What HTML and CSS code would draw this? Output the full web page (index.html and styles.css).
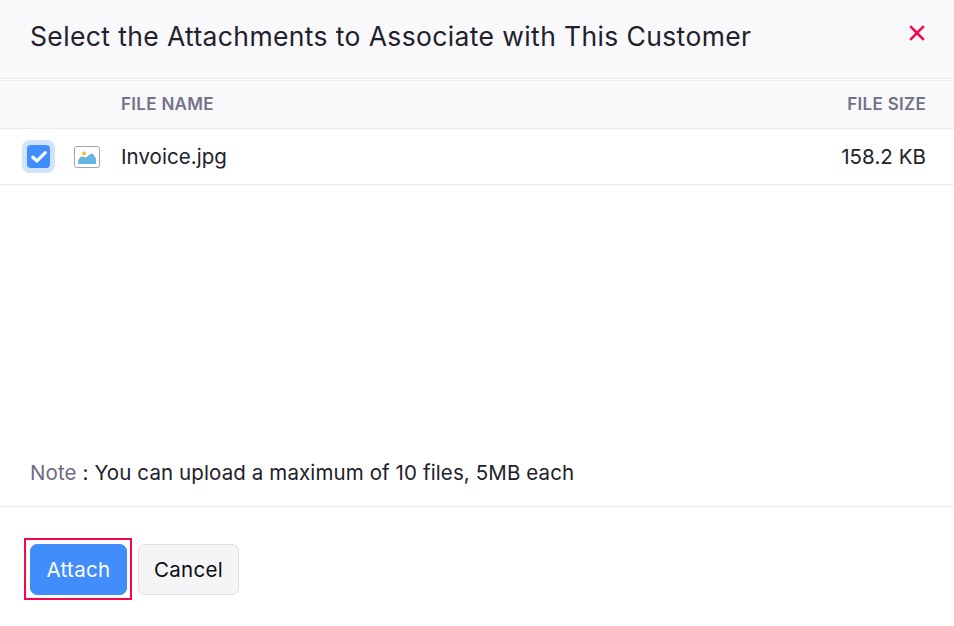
FILE: index.html
```html
<!DOCTYPE html>
<html lang="en">
<head>
<meta charset="utf-8">
<title>Select Attachments</title>
<link rel="stylesheet" href="styles.css">
</head>
<body>
<div class="modal">
  <header class="modal-header">
    <h1 class="modal-title">Select the Attachments to Associate with This Customer</h1>
    <svg class="close-icon" width="16" height="16" viewBox="0 0 16 16" aria-label="Close"><path d="M1.2 1.2L14.8 14.8M14.8 1.2L1.2 14.8" fill="none" stroke="#f5074f" stroke-width="2.6"/></svg>
  </header>
  <div class="table-head">
    <span class="col-name">FILE NAME</span>
    <span class="col-size">FILE SIZE</span>
  </div>
  <div class="table-row">
    <span class="check-wrap">
      <span class="check">
        <svg width="18" height="16" viewBox="0 0 18 16"><path d="M2.8 8.2L7 12L15.2 3.6" fill="none" stroke="#fff" stroke-width="3.2" stroke-linecap="round" stroke-linejoin="round"/></svg>
      </span>
    </span>
    <svg class="file-icon" width="26" height="22" viewBox="0 0 26 22">
      <rect x="0.5" y="0.5" width="25" height="21" rx="2" fill="#fff" stroke="#a3a3ac"/>
      <circle cx="10" cy="7.5" r="2" fill="#fbc02d"/>
      <path d="M4.2 18V14.6C5 12.5 6.5 10.6 8 10.6C9.5 10.6 10.5 11.6 11.6 11.6C13 11.6 15.5 7.4 17.6 7.4C19 7.4 20.5 10 22 12.5V18Z" fill="#63b6df"/>
    </svg>
    <span class="col-name file-name">Invoice.jpg</span>
    <span class="col-size file-size">158.2 KB</span>
  </div>
  <div class="spacer"></div>
  <p class="note"><span class="note-label">Note</span> : You can upload a maximum of 10 files, 5MB each</p>
  <footer class="modal-footer">
    <span class="highlight"><button class="btn btn-primary" type="button">Attach</button></span>
    <button class="btn btn-secondary" type="button">Cancel</button>
  </footer>
</div>
</body>
</html>
```

FILE: styles.css
```css
* { box-sizing: border-box; }
html, body { margin: 0; padding: 0; }
body {
  width: 954px;
  height: 626px;
  background: #fff;
  font-family: Inter, "Liberation Sans", sans-serif;
  color: #21212b;
  overflow: hidden;
}
.modal { display: flex; flex-direction: column; height: 626px; }
.modal-header {
  height: 79px;
  flex: none;
  display: flex;
  align-items: flex-start;
  justify-content: space-between;
  padding: 0 29px 0 30px;
  background: #f9f9fb;
  border-bottom: 1px solid #ebebf0;
}
.modal-title {
  margin: 20px 0 0;
  font-size: 26.5px;
  line-height: 32px;
  font-weight: 400;
  letter-spacing: 0.37px;
}
.close-icon { margin-top: 25px; }
.table-head {
  margin-top: 1px;
  height: 49px;
  flex: none;
  display: flex;
  align-items: center;
  padding: 0 28px 2px 121px;
  background: #f9f9fb;
  border-top: 1px solid #ebebf0;
  border-bottom: 1px solid #ebebf0;
  font-size: 17px;
  font-weight: 600;
  letter-spacing: 0.3px;
  color: #72728a;
}
.table-head .col-name { flex: 1; }
.table-row {
  height: 56px;
  flex: none;
  display: flex;
  align-items: center;
  padding: 0 28px 0 22px;
  border-bottom: 1px solid #ebebf0;
  font-size: 20.5px;
  letter-spacing: 0.05px;
}
.table-row .col-name, .table-row .col-size { margin-bottom: 1px; }
.check-wrap {
  width: 33px;
  height: 33px;
  border-radius: 8px;
  background: #d2e3ff;
  display: flex;
  align-items: center;
  justify-content: center;
}
.check {
  width: 23px;
  height: 23px;
  border-radius: 4px;
  background: #408dfb;
  display: flex;
  align-items: center;
  justify-content: center;
}
.file-icon { margin-left: 19px; margin-right: 21px; }
.file-name { flex: 1; }
.spacer { flex: 1; }
.note {
  margin: 0 0 20px;
  padding-left: 30px;
  font-size: 20.5px;
  line-height: 26px;
  letter-spacing: 0.11px;
}
.note-label { color: #6c6c80; }
.modal-footer {
  height: 120px;
  flex: none;
  display: flex;
  align-items: flex-start;
  gap: 6px;
  padding: 31px 0 0 24px;
  border-top: 1px solid #ebebf0;
}
.highlight {
  display: block;
  border: 2px solid #f5074f;
  padding: 4px 3px 3px 4px;
}
.btn {
  display: block;
  height: 51px;
  border-radius: 7px;
  font-family: inherit;
  font-size: 20.5px;
  letter-spacing: 0.3px;
  padding: 0;
}
.btn-primary {
  width: 97px;
  background: #408dfb;
  border: 1px solid #408dfb;
  color: #fff;
}
.btn-secondary {
  margin-top: 6px;
  width: 101px;
  background: #f5f5f7;
  border: 1px solid #e0e0e4;
  color: #0c0c12;
}
```
